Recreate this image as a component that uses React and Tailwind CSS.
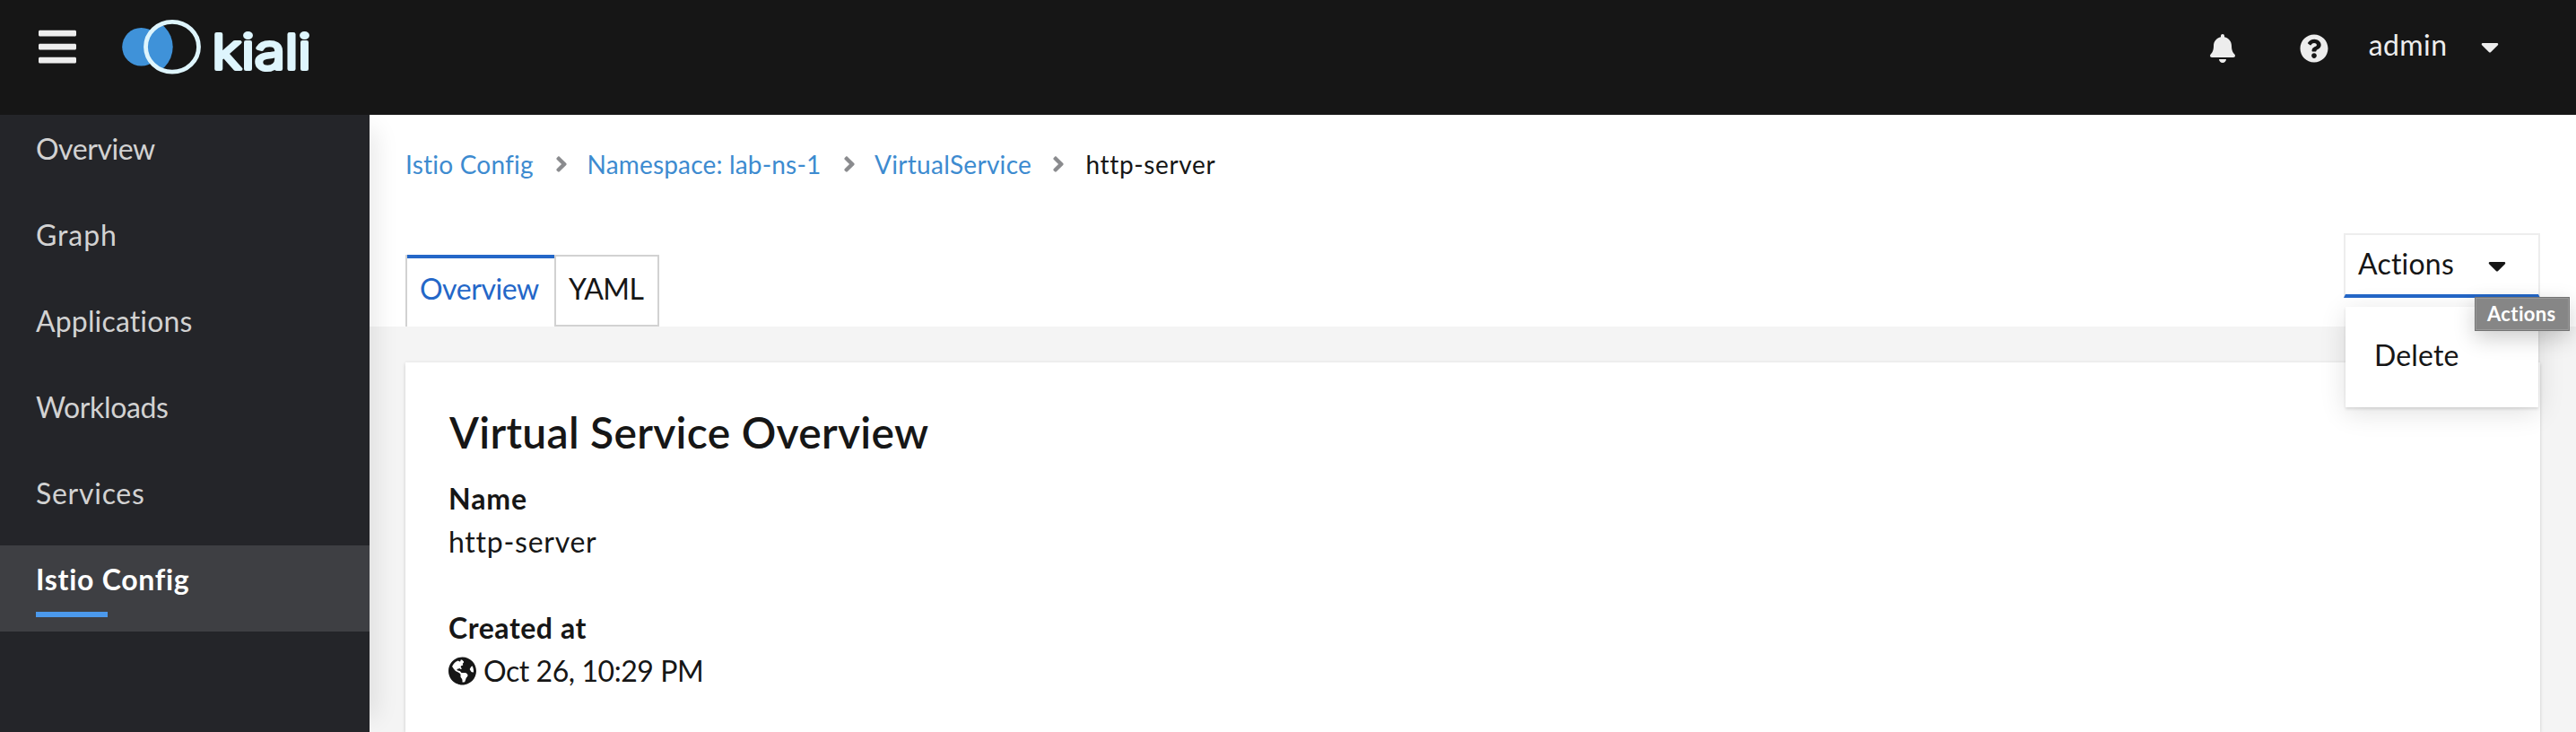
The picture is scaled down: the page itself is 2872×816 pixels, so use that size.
import React from 'react';
import {
  FaAngleRight,
  FaBars,
  FaBell,
  FaCaretDown,
  FaGlobeAmericas,
  FaQuestionCircle,
} from 'react-icons/fa';

const navItems = [
  { label: 'Overview', spacing: 'tracking-[-0.44px]' },
  { label: 'Graph', spacing: 'tracking-[0.91px]' },
  { label: 'Applications', spacing: 'tracking-[0.15px]' },
  { label: 'Workloads', spacing: 'tracking-[-0.36px]' },
  { label: 'Services', spacing: 'tracking-[0.73px]' },
  { label: 'Istio Config', spacing: 'tracking-[0.72px]', active: true },
];

function Logo() {
  return (
    <svg width="230" height="80" viewBox="0 0 230 80" className="ml-[51px] mt-[18px]">
      <circle cx="21.5" cy="34.3" r="21.3" fill="#3f92d9" />
      <clipPath id="ring">
        <ellipse cx="56" cy="34.3" rx="29.5" ry="27.9" />
      </clipPath>
      <g clipPath="url(#ring)">
        <circle cx="25" cy="34.3" r="31.7" fill="#3f92d9" />
      </g>
      <ellipse cx="56" cy="34.3" rx="29.5" ry="27.9" fill="none" stroke="#def5fd" strokeWidth="4.8" />
      <text
        transform="translate(100.4 59.4) scale(1.15 1)"
        fill="#def5fd"
        stroke="#def5fd"
        strokeWidth="4.2"
        strokeLinejoin="round"
        strokeLinecap="round"
        className="font-['Inter',sans-serif] text-[54px] font-light"
      >
        kiali
      </text>
    </svg>
  );
}

function Header() {
  return (
    <header className="relative z-20 flex h-32 shrink-0 items-start bg-[#161616] text-[#ededed]">
      <FaBars className="ml-[43px] mt-7 h-12 w-[42px]" />
      <Logo />
      <div className="ml-auto flex items-start pr-[86px]">
        <FaBell className="mt-[38px] h-8 w-7" />
        <FaQuestionCircle className="ml-[72px] mt-[38px] size-8" />
        <span className="ml-[44.7px] mt-[26px] w-[125.3px] text-[32px] leading-[48px] tracking-[0.42px]">
          admin
        </span>
        <FaCaretDown className="mt-9 h-8 w-5" />
      </div>
    </header>
  );
}

function Sidebar() {
  return (
    <nav className="relative z-10 w-[412px] shrink-0 bg-[#242529] shadow-[24px_0_24px_-16px_rgba(3,3,3,0.085)]">
      {navItems.map(({ label, spacing, active }) => (
        <div
          key={label}
          className={`h-24 pl-10 pt-3.5 text-[32px] leading-[48px] ${spacing} ${
            active ? 'bg-[#3e3f43] font-bold text-white' : 'text-[#d2d2d2]'
          }`}
        >
          {label}
          {active && <div className="mt-3 h-1.5 w-20 bg-[#4b99ec]" />}
        </div>
      ))}
    </nav>
  );
}

function Breadcrumb() {
  return (
    <div className="flex h-12 items-center text-[28px] leading-[48px] text-[#3d8bd0]">
      <a className="w-[167px] tracking-[0.22px]">Istio Config</a>
      <FaAngleRight className="h-7 w-3.5 text-[#8a8b8e]" />
      <a className="ml-[21.5px] w-[285px] tracking-[0.18px]">Namespace: lab-ns-1</a>
      <FaAngleRight className="h-7 w-3.5 text-[#8a8b8e]" />
      <a className="ml-[21.5px] w-[198px] tracking-[0.29px]">VirtualService</a>
      <FaAngleRight className="h-7 w-3.5 text-[#8a8b8e]" />
      <span className="ml-[23.5px] tracking-[0.64px] text-[#161616]">http-server</span>
    </div>
  );
}

function ActionsMenu() {
  return (
    <div className="relative z-10">
      <button className="flex h-[72px] w-[219px] items-start border-2 border-b-4 border-[#ededed] border-b-[#2467c8] bg-white pl-[14px] pt-2 text-[32px] leading-[48px] text-[#161616]">
        <span className="w-[145px] text-left tracking-[0.21px]">Actions</span>
        <FaCaretDown className="mt-[10px] h-8 w-5" />
      </button>
      <div className="absolute left-[2px] top-[82px] h-[112px] w-[215px] bg-white pl-8 pt-[30px] text-[32px] leading-[48px] tracking-[0.15px] shadow-[0_2px_3px_rgba(3,3,3,0.12),0_6px_28px_rgba(3,3,3,0.12)]">
        Delete
      </div>
      <div className="absolute left-[146px] top-[71px] h-[38px] w-[106px] border border-[#747474] bg-[#868686] pl-[13px] text-[22px] font-bold leading-[36px] tracking-[0.37px] text-white shadow-[inset_0_0_0_1px_#989898,0_8px_24px_rgba(0,0,0,0.2)]">
        Actions
      </div>
    </div>
  );
}

function Details() {
  return (
    <section className="mx-10 mt-10 flex-1 bg-white pl-12 pt-12 text-[32px] leading-[48px] shadow-[0_2px_4px_rgba(3,3,3,0.12),0_0_4px_rgba(3,3,3,0.06)]">
      <h1 className="ml-px text-[48px] font-semibold leading-[60px] tracking-[0.29px]">Virtual Service Overview</h1>
      <h2 className="mt-5 font-bold tracking-[0.91px]">Name</h2>
      <p className="tracking-[0.73px]">http-server</p>
      <h2 className="mt-12 font-bold tracking-[0.55px]">Created at</h2>
      <p className="flex items-center gap-2 tracking-[-0.44px]">
        <FaGlobeAmericas className="h-8 w-[31px]" />
        Oct 26, 10:29 PM
      </p>
    </section>
  );
}

export default function App() {
  return (
    <div className="flex h-[816px] w-[2872px] flex-col overflow-hidden bg-[#f4f4f4] font-['Lato','Liberation_Sans',sans-serif] text-[#161616]">
      <Header />
      <div className="flex min-h-0 flex-1">
        <Sidebar />
        <main className="flex min-w-0 flex-1 flex-col">
          <div className="h-[236px] shrink-0 bg-white px-10 pt-[31px]">
            <Breadcrumb />
            <div className="mt-[53px] flex h-[104px] items-start justify-between">
              <div className="flex h-20 self-end text-[32px] leading-[48px]">
                <div className="flex">
                  <div className="w-0.5 bg-[#d2d2d2]" />
                  <div className="w-[164px] border-t-4 border-[#2467c8] pl-3.5 pt-2.5 tracking-[-0.44px] text-[#2467c8]">
                    Overview
                  </div>
                </div>
                <div className="w-[117px] border-2 border-[#d2d2d2] pl-[14px] pt-3 tracking-[-0.53px]">
                  YAML
                </div>
              </div>
              <ActionsMenu />
            </div>
          </div>
          <Details />
        </main>
      </div>
    </div>
  );
}
